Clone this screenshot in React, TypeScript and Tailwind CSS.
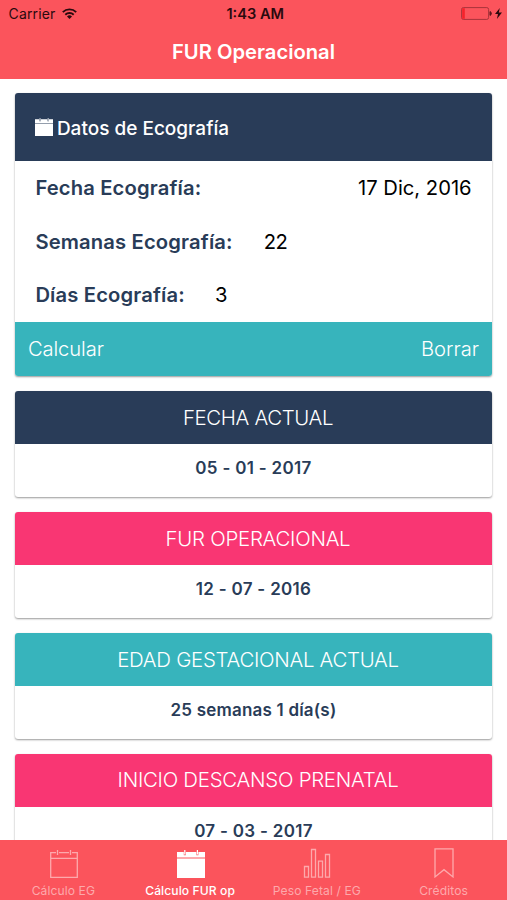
import type { ReactNode } from 'react'

interface ResultCardProps {
  title: string
  value: string
  headerClass: string
  titleClass: string
  valueClass: string
}

const results: ResultCardProps[] = [
  {
    title: 'FECHA ACTUAL',
    value: '05 - 01 - 2017',
    headerClass: 'bg-[#293c58]',
    titleClass: 'tracking-[-0.35px]',
    valueClass: 'tracking-[0.3px]',
  },
  {
    title: 'FUR OPERACIONAL',
    value: '12 - 07 - 2016',
    headerClass: 'bg-[#f93673]',
    titleClass: 'tracking-[-0.25px]',
    valueClass: 'tracking-[0.3px]',
  },
  {
    title: 'EDAD GESTACIONAL ACTUAL',
    value: '25 semanas 1 día(s)',
    headerClass: 'bg-[#37b4bc]',
    titleClass: 'tracking-[-0.27px]',
    valueClass: 'tracking-[0.2px]',
  },
  {
    title: 'INICIO DESCANSO PRENATAL',
    value: '07 - 03 - 2017',
    headerClass: 'bg-[#f93673]',
    titleClass: 'tracking-[-0.25px]',
    valueClass: 'tracking-[0.3px]',
  },
]

function CalendarFilled({ className }: { className: string }) {
  return (
    <svg className={className} viewBox="0 0 28 28" fill="currentColor" aria-hidden="true">
      <path d="M0 2h6.8v3.2h2V2h10.6v3.2h2V2H28v5.6H0Z" />
      <path d="M7.2 0h1.2v4.6H7.2ZM19.8 0h1.2v4.6h-1.2ZM0 8.6h28V28H0Z" />
    </svg>
  )
}

function CalendarOutline() {
  return (
    <svg className="h-7 w-7" viewBox="0 0 28 28" fill="none" stroke="currentColor" strokeWidth="1.3" aria-hidden="true">
      <path d="M6 2.6H.7v24.8h26.6V2.6H22M9 2.6h10M.7 8.4h26.6M7.5 0v5M20.5 0v5" />
    </svg>
  )
}

function BarsOutline() {
  return (
    <svg className="h-[30px] w-7" viewBox="0 0 28 30" fill="none" stroke="currentColor" strokeWidth="1.3" aria-hidden="true">
      <path d="M1.5 18.5h4v10.7h-4ZM8.5 1.5h4v27.7h-4ZM15.5 13.2h4v16h-4ZM22.5 6.5h4v22.7h-4Z" />
    </svg>
  )
}

function BookmarkOutline() {
  return (
    <svg className="h-[30px] w-5" viewBox="0 0 20 30" fill="none" stroke="currentColor" strokeWidth="1.3" aria-hidden="true">
      <path d="M1 .9h18v28l-9-7.2-9 7.2Z" />
    </svg>
  )
}

function StatusBar() {
  return (
    <div className="flex h-7 items-center justify-between pl-[8.5px] pr-[5px] text-[14px] leading-none text-[#2a0a0e]">
      <div className="flex flex-1 items-center gap-[7px]">
        <span className="tracking-[0.15px]">Carrier</span>
        <svg className="mb-[2px] h-[11px] w-[15px]" viewBox="0 0 15 11" fill="none" stroke="currentColor" strokeWidth="1.9" aria-hidden="true">
          <path d="M.8 4.1a9.6 9.6 0 0 1 13.4 0M3.3 6.7a6 6 0 0 1 8.4 0" />
          <path d="M7.5 11 5 8.5a3.6 3.6 0 0 1 5 0Z" fill="currentColor" stroke="none" />
        </svg>
      </div>
      <span className="text-[14.6px] font-semibold">1:43 AM</span>
      <div className="flex flex-1 items-center justify-end gap-[3px] pb-px">
        <svg className="h-[13px] w-[31px]" viewBox="0 0 31 13" fill="none" aria-hidden="true">
          <rect x=".6" y=".6" width="27" height="11.8" rx="1.8" stroke="#a8333b" />
          <rect x="1.2" y="1.2" width="2.6" height="10.6" fill="#f5222b" />
          <path d="M29 4.6a2 2 0 0 1 0 3.8Z" fill="#5a161c" stroke="#5a161c" />
        </svg>
        <svg className="h-[11px] w-[7px]" viewBox="0 0 7 11" fill="currentColor" aria-hidden="true">
          <path d="M4.8 0 0 6h3L1.9 11 7 4.6H3.8Z" />
        </svg>
      </div>
    </div>
  )
}

function Field({ label, children }: { label: string; children: ReactNode }) {
  return (
    <div className="flex h-[53.8px] items-center px-5 text-[20.2px]">
      <span className="font-semibold tracking-[0.15px] text-[#293c58]">{label}</span>
      {children}
    </div>
  )
}

function ResultCard({ title, value, headerClass, titleClass, valueClass }: ResultCardProps) {
  return (
    <section className="h-[106px] shrink-0 overflow-hidden rounded-[3px] bg-white shadow-[0_1px_2px_rgba(0,0,0,0.4)]">
      <h2
        className={`flex h-[53.4px] items-center justify-center pl-[9px] pt-px text-[20.4px] font-[350] text-white ${headerClass} ${titleClass}`}
      >
        {title}
      </h2>
      <p className={`pt-3 text-center text-[17px] font-semibold leading-6 text-[#293c58] ${valueClass}`}>
        {value}
      </p>
    </section>
  )
}

function Tab({ label, active, children }: { label: string; active?: boolean; children: ReactNode }) {
  return (
    <button
      type="button"
      className={`flex flex-1 flex-col items-center ${active ? 'text-white' : 'text-[#fda9ac]'}`}
    >
      <span className="flex h-[43px] items-end pb-[5px] pl-px">{children}</span>
      <span className={`text-[12.1px] leading-4 tracking-[0.1px] ${active ? 'font-medium' : ''}`}>{label}</span>
    </button>
  )
}

export default function App() {
  return (
    <div className="flex h-[900px] w-[507px] flex-col overflow-hidden bg-white font-['Inter',sans-serif]">
      <header className="h-[79px] shrink-0 bg-[#fb545c]">
        <StatusBar />
        <h1 className="pt-[9px] text-center text-[20.2px] font-semibold leading-[30px] text-white">
          FUR Operacional
        </h1>
      </header>

      <main className="flex min-h-0 flex-1 flex-col gap-[14.9px] overflow-hidden px-[15.4px] pt-[14px]">
        <section className="h-[283px] shrink-0 overflow-hidden rounded-[3px] bg-white shadow-[0_1px_2px_rgba(0,0,0,0.4)]">
          <h2 className="flex h-[68px] items-center gap-[4px] bg-[#293c58] pl-[19.5px] pt-1 text-[19px] font-medium text-white">
            <CalendarFilled className="mb-1 h-[18px] w-[18px]" />
            Datos de Ecografía
          </h2>
          <Field label="Fecha Ecografía:">
            <span className="ml-auto text-black">17 Dic, 2016</span>
          </Field>
          <Field label="Semanas Ecografía:">
            <span className="ml-[31px] tracking-[-0.5px] text-black">22</span>
          </Field>
          <Field label="Días Ecografía:">
            <span className="ml-[30px] text-black">3</span>
          </Field>
          <div className="flex h-[54px] items-center justify-between bg-[#37b4bc] px-[12.5px] text-[20.2px] font-[350] text-white">
            <button type="button" className="tracking-[-0.1px]">Calcular</button>
            <button type="button">Borrar</button>
          </div>
        </section>

        {results.map((result) => (
          <ResultCard key={result.title} {...result} />
        ))}
      </main>

      <nav className="flex h-[60px] shrink-0 bg-[#fb545c]">
        <Tab label="Cálculo EG">
          <CalendarOutline />
        </Tab>
        <Tab label="Cálculo FUR op" active>
          <CalendarFilled className="h-7 w-7" />
        </Tab>
        <Tab label="Peso Fetal / EG">
          <BarsOutline />
        </Tab>
        <Tab label="Créditos">
          <BookmarkOutline />
        </Tab>
      </nav>
    </div>
  )
}
